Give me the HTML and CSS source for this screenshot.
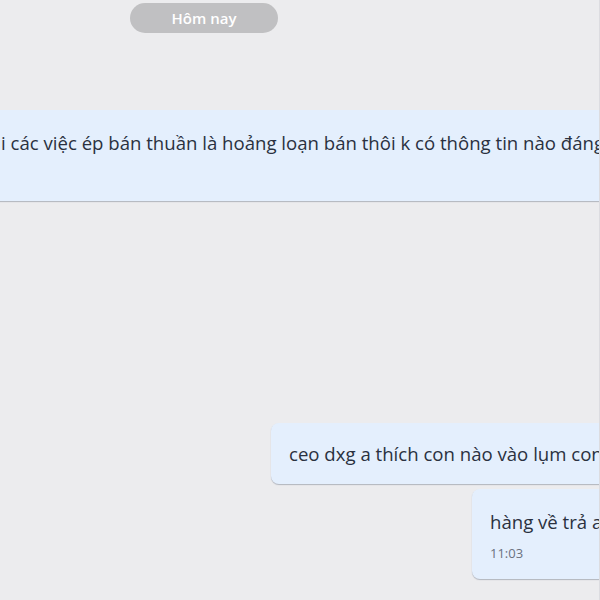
FILE: index.html
```html
<!DOCTYPE html>
<html lang="vi">
<head>
<meta charset="utf-8">
<link rel="stylesheet" href="styles.css">
</head>
<body>
<div class="chat">
  <div class="date-row"><span class="date-pill">Hôm nay</span></div>
  <div class="msg msg-wide">
    <div class="text">i các việc ép bán thuần là hoảng loạn bán thôi k có thông tin nào đáng</div>
  </div>
  <div class="msg msg-mid">
    <div class="text">ceo dxg a thích con nào vào lụm con</div>
  </div>
  <div class="msg msg-short">
    <div class="text">hàng về trả a</div>
    <div class="time">11:03</div>
  </div>
</div>
</body>
</html>
```
FILE: styles.css
```css
html, body {
  margin: 0;
  padding: 0;
  width: 600px;
  height: 600px;
  overflow: hidden;
  background: #ececee;
}
.chat {
  width: 600px;
  height: 600px;
  overflow: hidden;
  font-family: "Open Sans", "Noto Sans", sans-serif;
  color: #2a3140;
  box-sizing: border-box;
  border-right: 1px solid #dcdce0;
}
.date-row {
  padding-top: 3px;
  padding-left: 130px;
  height: 30px;
}
.date-pill {
  display: inline-block;
  box-sizing: border-box;
  width: 148px;
  height: 30px;
  line-height: 30px;
  border-radius: 15px;
  background: #c0c0c2;
  color: #fff;
  font-size: 15px;
  font-weight: 600;
  text-align: center;
}
.msg {
  background: #e4effd;
  border-radius: 8px;
  box-shadow: 0 1px 1px rgba(70, 80, 100, 0.35);
  white-space: nowrap;
  box-sizing: border-box;
}
.text {
  font-size: 18.6px;
  line-height: 24px;
}
.msg-wide {
  margin-top: 77px;
  margin-left: -20px;
  width: 700px;
  height: 91px;
  padding: 21px 0 0 21px;
}
.msg-mid {
  margin-top: 222px;
  margin-left: 271px;
  width: 400px;
  height: 61px;
  padding: 19px 0 0 18px;
}
.msg-short {
  margin-top: 5px;
  margin-left: 472px;
  width: 200px;
  height: 90px;
  padding: 21px 0 0 18px;
}
.time {
  font-size: 13px;
  line-height: 18px;
  margin-top: 10px;
  color: #6b7280;
}
```
